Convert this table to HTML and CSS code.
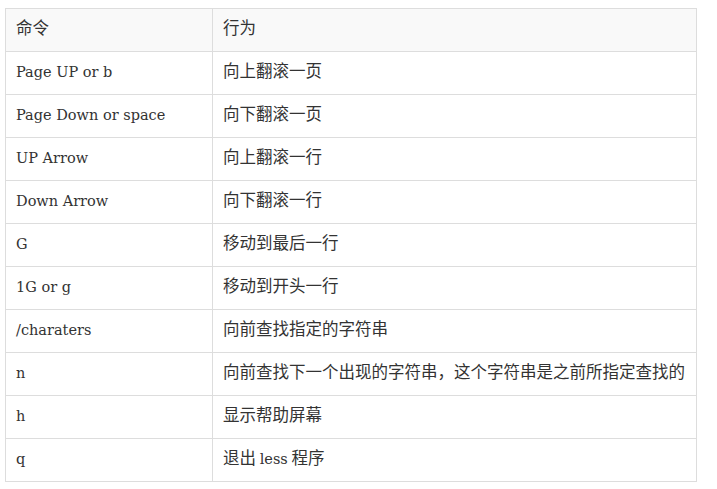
FILE: index.html
```html
<!DOCTYPE html>
<html lang="zh-CN">
<head>
<meta charset="utf-8">
<title>less 命令</title>
<link rel="stylesheet" href="styles.css">
</head>
<body>
<table class="cmd-table">
  <colgroup>
    <col class="col-cmd">
    <col class="col-act">
  </colgroup>
  <thead>
    <tr><th class="zh">命令</th><th class="zh">行为</th></tr>
  </thead>
  <tbody>
    <tr><td>Page UP or b</td><td class="zh">向上翻滚一页</td></tr>
    <tr><td>Page Down or space</td><td class="zh">向下翻滚一页</td></tr>
    <tr><td>UP Arrow</td><td class="zh">向上翻滚一行</td></tr>
    <tr><td>Down Arrow</td><td class="zh">向下翻滚一行</td></tr>
    <tr><td>G</td><td class="zh">移动到最后一行</td></tr>
    <tr><td>1G or g</td><td class="zh">移动到开头一行</td></tr>
    <tr><td>/charaters</td><td class="zh">向前查找指定的字符串</td></tr>
    <tr><td>n</td><td class="zh">向前查找下一个出现的字符串，这个字符串是之前所指定查找的</td></tr>
    <tr><td>h</td><td class="zh">显示帮助屏幕</td></tr>
    <tr><td>q</td><td class="zh">退出 <span class="en">less</span> 程序</td></tr>
  </tbody>
</table>
</body>
</html>
```
FILE: styles.css
```css
html, body {
  background: #ffffff;
}
body {
  margin: 8px 20px 8px 5px;
  font-family: "DejaVu Serif", "Noto Sans CJK SC", serif;
  font-size: 14.5px;
  color: #333333;
}
.cmd-table {
  width: 692px;
  border-collapse: collapse;
  table-layout: fixed;
  border: 1px solid #dddddd;
}
.col-cmd {
  width: 207px;
}
.cmd-table tr {
  height: 43px;
}
.cmd-table th,
.cmd-table td {
  padding: 6px 10px 0;
  border: 1px solid #dddddd;
  text-align: left;
  vertical-align: baseline;
  font-weight: normal;
  white-space: nowrap;
}
.cmd-table thead th {
  background: #f9f9f9;
}
.zh {
  font-family: "Noto Sans CJK SC", sans-serif;
  font-size: 16.5px;
}
.en {
  font-family: "DejaVu Serif", serif;
  font-size: 14.5px;
}
```
